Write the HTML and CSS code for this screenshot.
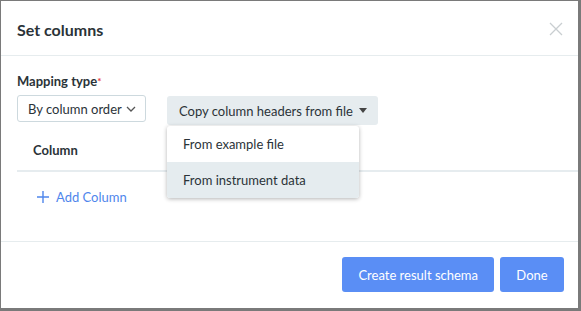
FILE: index.html
```
<!DOCTYPE html>
<html lang="en">
<head>
    <meta charset="UTF-8">
    <title>Set columns</title>
    <link rel="stylesheet" href="styles.css">
</head>
<body>
    <div class="modal">
        <div class="modal-head">
            <span class="modal-title">Set columns</span>
            <svg class="close-icon" width="14" height="14" viewBox="0 0 14 14">
                <path d="M1 1L13 13M13 1L1 13" stroke="#c9ced1" stroke-width="1.3" fill="none"/>
            </svg>
        </div>
        <div class="modal-body">
            <div class="field-label">Mapping type<span class="req">*</span></div>
            <div class="controls">
                <div class="select-box">
                    By column order
                    <svg width="10" height="6" viewBox="0 0 10 6">
                        <path d="M1 1L5 5L9 1" stroke="#555" stroke-width="1.3" fill="none"/>
                    </svg>
                </div>
                <div class="copy-wrap">
                    <div class="copy-btn">
                        Copy column headers from file
                        <svg width="8" height="5" viewBox="0 0 8 5">
                            <path d="M0 0H8L4 5Z" fill="#444"/>
                        </svg>
                    </div>
                    <div class="menu">
                        <div class="menu-item">From example file</div>
                        <div class="menu-item active">From instrument data</div>
                    </div>
                </div>
            </div>
            <div class="table-head">Column</div>
            <div class="add-col">
                <svg width="12" height="12" viewBox="0 0 12 12">
                    <path d="M6 0V12M0 6H12" stroke="#4f86ec" stroke-width="1.4"/>
                </svg>
                Add Column
            </div>
        </div>
        <div class="modal-foot">
            <button class="btn">Create result schema</button>
            <button class="btn btn-done">Done</button>
        </div>
    </div>
</body>
</html>
```
FILE: styles.css
```
html,
body {
    padding: 0;
    margin: 0;
}

body {
    background-color: #7a7a7a;
    font-family: Lato, "Liberation Sans", sans-serif;
    color: #2b3338;
    width: 581px;
    height: 311px;
    overflow: hidden;
}

.modal {
    margin: 1px 0 0 1px;
    width: 577px;
    height: 307px;
    background-color: #fff;
    display: flex;
    flex-direction: column;
    box-sizing: border-box;
}

.modal-head {
    height: 55px;
    border-bottom: 1px solid #e6ecee;
    display: flex;
    align-items: center;
    justify-content: space-between;
    padding: 0 15px 0 16px;
    box-sizing: border-box;
}

.modal-title {
    font-size: 16px;
    font-weight: bold;
    padding-top: 2px;
}

.close-icon {
    margin-top: 2px;
}

.modal-body {
    flex: 1;
    padding: 17px 0 0 16px;
    position: relative;
}

.field-label {
    font-size: 13px;
    font-weight: bold;
    line-height: 16px;
}

.req {
    color: #e8383d;
    font-size: 10px;
    vertical-align: top;
}

.controls {
    display: flex;
    align-items: flex-start;
    margin-top: 6px;
}

.select-box {
    height: 27px;
    width: 129px;
    border: 1px solid #cdd9de;
    border-radius: 3px;
    box-sizing: border-box;
    display: flex;
    align-items: center;
    justify-content: space-between;
    padding: 0 9px 0 10px;
    font-size: 13px;
    white-space: nowrap;
}

.copy-wrap {
    margin-left: 21px;
    position: relative;
    margin-top: 1px;
}

.copy-btn {
    height: 29px;
    width: 211px;
    box-sizing: border-box;
    background-color: #e6ecef;
    border-radius: 3px;
    display: flex;
    align-items: center;
    justify-content: space-between;
    padding: 0 11px 0 12px;
    font-size: 13px;
    white-space: nowrap;
}

.menu {
    position: absolute;
    top: 30px;
    left: 0;
    width: 192px;
    background-color: #fff;
    border-radius: 3px;
    box-shadow: 0 1px 4px rgba(0, 0, 0, 0.3);
    z-index: 2;
    overflow: hidden;
}

.menu-item {
    height: 36px;
    line-height: 36px;
    padding-left: 16px;
    font-size: 13px;
}

.menu-item.active {
    background-color: #e5ecef;
}

.table-head {
    margin-top: 12px;
    height: 33px;
    line-height: 26px;
    border-bottom: 2px solid #e6ecef;
    font-size: 13px;
    font-weight: bold;
    padding-left: 16px;
}

.add-col {
    margin-top: 17px;
    margin-left: 20px;
    color: #4f86ec;
    font-size: 13px;
    display: flex;
    align-items: center;
    gap: 7px;
}

.modal-foot {
    height: 67px;
    border-top: 1px solid #e6ecee;
    display: flex;
    justify-content: flex-end;
    align-items: flex-start;
    padding: 15px 14px 0 0;
    gap: 6px;
    box-sizing: border-box;
}

.btn {
    height: 35px;
    background-color: #5a8ef5;
    color: #fff;
    border: none;
    border-radius: 3px;
    font-family: Lato, "Liberation Sans", sans-serif;
    font-size: 13px;
    padding: 0 16px;
}

.btn-done {
    width: 64px;
    padding: 0;
}
```
